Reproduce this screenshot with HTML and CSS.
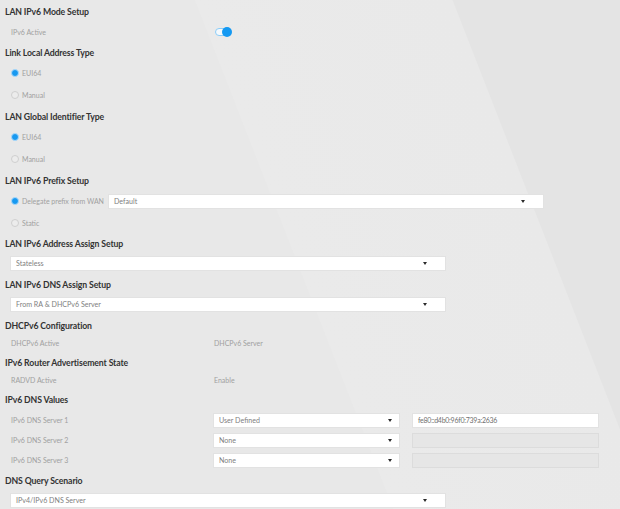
FILE: index.html
```html
<!DOCTYPE html>
<html lang="en">
<head>
<meta charset="utf-8">
<title>LAN IPv6 Setup</title>
<link rel="stylesheet" href="styles.css">
</head>
<body>
<main class="page">
  <section class="group">
    <h2 class="title">LAN IPv6 Mode Setup</h2>
    <div class="row row-toggle">
      <span class="label">IPv6 Active</span>
      <span class="switch"><span class="knob"></span></span>
    </div>
  </section>

  <section class="group">
    <h2 class="title">Link Local Address Type</h2>
    <div class="opt"><span class="radio checked"></span><span class="label">EUI64</span></div>
    <div class="opt"><span class="radio"></span><span class="label">Manual</span></div>
  </section>

  <section class="group">
    <h2 class="title">LAN Global Identifier Type</h2>
    <div class="opt"><span class="radio checked"></span><span class="label">EUI64</span></div>
    <div class="opt"><span class="radio"></span><span class="label">Manual</span></div>
  </section>

  <section class="group">
    <h2 class="title">LAN IPv6 Prefix Setup</h2>
    <div class="opt opt-select">
      <span class="opt-main"><span class="radio checked"></span><span class="label">Delegate prefix from WAN</span></span>
      <div class="select select-wide"><span>Default</span><span class="caret"></span></div>
    </div>
    <div class="opt opt-last"><span class="radio"></span><span class="label">Static</span></div>
  </section>

  <section class="group">
    <h2 class="title">LAN IPv6 Address Assign Setup</h2>
    <div class="row-select">
      <div class="select select-wide"><span>Stateless</span><span class="caret"></span></div>
    </div>
  </section>

  <section class="group">
    <h2 class="title">LAN IPv6 DNS Assign Setup</h2>
    <div class="row-select">
      <div class="select select-wide"><span>From RA &amp; DHCPv6 Server</span><span class="caret"></span></div>
    </div>
  </section>

  <section class="group">
    <h2 class="title">DHCPv6 Configuration</h2>
    <div class="row row-text">
      <span class="label">DHCPv6 Active</span>
      <span class="label">DHCPv6 Server</span>
    </div>
  </section>

  <section class="group">
    <h2 class="title">IPv6 Router Advertisement State</h2>
    <div class="row row-text">
      <span class="label">RADVD Active</span>
      <span class="label">Enable</span>
    </div>
  </section>

  <section class="group">
    <h2 class="title">IPv6 DNS Values</h2>
    <div class="dns-list">
      <div class="dns-row">
        <span class="label">IPv6 DNS Server 1</span>
        <div class="select select-narrow"><span>User Defined</span><span class="caret"></span></div>
        <div class="field">fe80::d4b0:96f0:739a:2636</div>
      </div>
      <div class="dns-row">
        <span class="label">IPv6 DNS Server 2</span>
        <div class="select select-narrow"><span>None</span><span class="caret"></span></div>
        <div class="field field-disabled"></div>
      </div>
      <div class="dns-row">
        <span class="label">IPv6 DNS Server 3</span>
        <div class="select select-narrow"><span>None</span><span class="caret"></span></div>
        <div class="field field-disabled"></div>
      </div>
    </div>
  </section>

  <section class="group">
    <h2 class="title">DNS Query Scenario</h2>
    <div class="row-select">
      <div class="select select-wide"><span>IPv4/IPv6 DNS Server</span><span class="caret"></span></div>
    </div>
  </section>
</main>
</body>
</html>
```

FILE: styles.css
```css
html, body {
  margin: 0;
  padding: 0;
}

body {
  width: 620px;
  height: 509px;
  overflow: hidden;
  font-family: "Lato", "Open Sans", "DejaVu Sans", sans-serif;
  background: linear-gradient(68.7deg,
    #e8e8e8 0px,
    #e8e8e8 366px,
    #eaeaea 367px,
    #e9e9e9 606px,
    #e4e4e4 607px,
    #e4e4e4 100%);
}

.page {
  padding: 1px 0 0 5px;
  display: flex;
  flex-direction: column;
}

.title {
  margin: 2px 0 0;
  height: 18px;
  line-height: 18px;
  font-size: 8.7px;
  letter-spacing: -0.12px;
  font-weight: 700;
  color: #333333;
}

.label {
  font-size: 7px;
  color: #a0a0a0;
  white-space: nowrap;
}

.row {
  display: grid;
  grid-template-columns: 203px auto;
  align-items: center;
  padding-left: 6px;
}

.row-toggle {
  height: 20px;
  padding-top: 1px;
}

.row-text {
  height: 16px;
  padding-bottom: 1px;
}

.switch {
  position: relative;
  width: 14px;
  height: 8px;
  margin-left: 1px;
  box-sizing: border-box;
  border: 1px solid #8ccdf8;
  border-radius: 5px;
  background: #f4f9fd;
}

.knob {
  position: absolute;
  top: -2px;
  left: 6px;
  width: 10px;
  height: 10px;
  border-radius: 50%;
  background: #1499f2;
}

.opt {
  height: 22px;
  display: flex;
  align-items: center;
  padding-left: 6px;
}

.opt-last {
  height: 21px;
}

.opt-select {
  display: grid;
  grid-template-columns: 97px 435px;
  align-items: center;
}

.opt-main {
  display: flex;
  align-items: center;
}

.radio {
  width: 8px;
  height: 8px;
  box-sizing: border-box;
  border-radius: 50%;
  border: 1px solid #cfcfcf;
  background: #ececec;
  margin-right: 3px;
  flex: none;
}

.radio.checked {
  border: 1.5px solid #a9d8fb;
  background: #1899f0;
}

.row-select {
  height: 21px;
  display: flex;
  align-items: center;
  padding-left: 5px;
}

.select {
  height: 15px;
  box-sizing: border-box;
  background: #ffffff;
  border: 1px solid #e2e2e2;
  display: flex;
  align-items: center;
  justify-content: space-between;
  padding: 0 18px 0 5px;
  font-size: 7.1px;
  color: #808080;
}

.select-wide {
  width: 436px;
}

.select-narrow {
  width: 187px;
  padding-right: 7px;
}

.caret {
  width: 0;
  height: 0;
  border-left: 2.5px solid transparent;
  border-right: 2.5px solid transparent;
  border-top: 3px solid #2a2a2a;
}

.dns-list {
  padding-top: 1px;
  display: flex;
  flex-direction: column;
}

.dns-row {
  height: 20px;
  display: grid;
  grid-template-columns: 190px 187px 187px;
  column-gap: 12px;
  align-items: center;
  padding-left: 6px;
}

.field {
  height: 15px;
  box-sizing: border-box;
  background: #ffffff;
  border: 1px solid #e2e2e2;
  padding-left: 5px;
  font-size: 7px;
  letter-spacing: -0.25px;
  line-height: 13px;
  color: #707070;
}

.field-disabled {
  background: #e6e6e6;
  border-color: #dcdcdc;
}
```
